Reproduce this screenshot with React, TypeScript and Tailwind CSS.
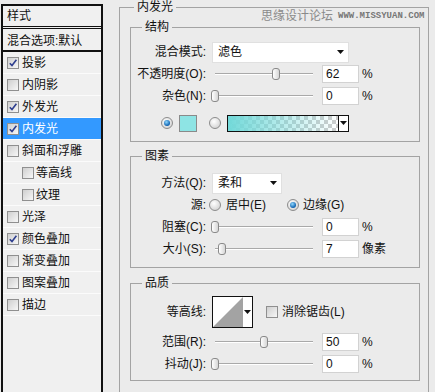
import React from "react";

const FONT = "font-['Liberation_Sans','Noto_Sans_CJK_SC',sans-serif]";

const layers = [
  { name: "投影", checked: true },
  { name: "内阴影", checked: false },
  { name: "外发光", checked: true },
  { name: "内发光", checked: true, active: true },
  { name: "斜面和浮雕", checked: false },
  { name: "等高线", checked: false, indent: true },
  { name: "纹理", checked: false, indent: true },
  { name: "光泽", checked: false },
  { name: "颜色叠加", checked: true },
  { name: "渐变叠加", checked: false },
  { name: "图案叠加", checked: false },
  { name: "描边", checked: false },
];

function Check({ checked }: { checked?: boolean }) {
  return (
    <span className="flex h-[12px] w-[12px] shrink-0 items-center justify-center border border-[#8f8f8f] bg-[linear-gradient(135deg,#cfcfcf,#f7f7f7)]">
      {checked && (
        <svg width="10" height="10" viewBox="0 0 10 10">
          <path d="M1.8 5.2 L4 7.6 L8.4 1.8" fill="none" stroke="#2f3f8f" strokeWidth="1.6" />
        </svg>
      )}
    </span>
  );
}

function Radio({ on }: { on?: boolean }) {
  return (
    <span className="flex h-[12px] w-[12px] shrink-0 items-center justify-center rounded-full border border-[#8c8c8c] bg-[radial-gradient(circle_at_40%_35%,#ffffff,#c9c9c9)]">
      {on && <span className="h-[6px] w-[6px] rounded-full bg-[radial-gradient(circle_at_40%_35%,#8fd8ff,#0b5fae_70%)]" />}
    </span>
  );
}

function Arrow() {
  return (
    <svg width="7" height="4" viewBox="0 0 7 4" className="shrink-0">
      <path d="M0 0 H7 L3.5 4 Z" fill="#111" />
    </svg>
  );
}

function Label({ children }: { children: React.ReactNode }) {
  return <span className="w-[75px] shrink-0 text-right">{children}</span>;
}

function Slider({ pct }: { pct: number }) {
  return (
    <div className="relative ml-[5px] h-[14px] w-[105px] shrink-0">
      <div className="absolute left-[4px] right-[3px] top-[6px] h-[2px] border-t border-[#a9a9a9] bg-white" />
      <div
        className="absolute top-[1px] h-[12px] w-[8px] rounded-[3px] border border-[#8a8a8a] bg-[linear-gradient(to_right,#ffffff,#d6d6d6)]"
        style={{ left: `${pct * 0.98}px` }}
      />
    </div>
  );
}

function NumBox({ v, unit = "%" }: { v: string; unit?: string }) {
  return (
    <>
      <div className="ml-[6px] flex h-[18px] w-[37px] shrink-0 items-center border border-[#d2d2d2] bg-white pl-[3px]">
        {v}
      </div>
      <span className="ml-[3px]">{unit}</span>
    </>
  );
}

function Group({ title, className, children }: { title: string; className: string; children: React.ReactNode }) {
  return (
    <fieldset className={`ml-[10px] w-[290px] border border-[#a3a3a3] ${className}`}>
      <legend className="ml-[11px] px-[3px] leading-[14px]">{title}</legend>
      {children}
    </fieldset>
  );
}

export default function App() {
  return (
    <div className={`relative flex h-[392px] w-[435px] overflow-hidden bg-[#ebebeb] text-[12px] text-[#111] ${FONT}`}>
      {/* layer style list */}
      <div className="ml-[1px] mt-[4px] h-[400px] w-[102px] shrink-0 border-2 border-[#111] bg-[#f0f0f0]">
        <div className="flex h-[20px] items-center pl-[4px]">样式</div>
        <div className="h-[3px] border-y border-[#111]" />
        <div className="flex h-[23px] items-center border-b-2 border-[#111] pl-[4px] pt-[2px]">混合选项:默认</div>
        {layers.map((l) => (
          <div
            key={l.name}
            className={`flex h-[22px] items-center border-b border-[#fbfbfb] ${l.active ? "bg-[#3399ff] text-white" : ""}`}
          >
            <span className={l.indent ? "ml-[19px]" : "ml-[4px]"}>
              <Check checked={l.checked} />
            </span>
            <span className={l.indent ? "ml-[2px]" : "ml-[3px]"}>{l.name}</span>
          </div>
        ))}
      </div>

      {/* inner glow settings */}
      <fieldset className="ml-[16px] h-[400px] w-[310px] shrink-0 border border-[#a3a3a3]">
        <legend className="ml-[14px] px-[3px] leading-[14px]">内发光</legend>

        <Group title="结构" className="mt-[6px] pb-[7px]">
          <div className="mt-[7px] flex h-[22px] items-center">
            <Label>混合模式:</Label>
            <div className="ml-[6px] flex h-[21px] w-[137px] items-center justify-between border border-[#e0e0e0] bg-white pl-[5px] pr-[4px]">
              <span>滤色</span>
              <Arrow />
            </div>
          </div>
          <div className="flex h-[22px] items-center">
            <Label>不透明度(O):</Label>
            <Slider pct={62} />
            <NumBox v="62" />
          </div>
          <div className="flex h-[22px] items-center">
            <Label>杂色(N):</Label>
            <Slider pct={0} />
            <NumBox v="0" />
          </div>
          <div className="mt-[5px] flex h-[22px] items-center pl-[30px]">
            <Radio on />
            <div className="ml-[6px] h-[17px] w-[18px] border border-[#8a8a8a] bg-[#8ee4e4]" />
            <span className="ml-[12px]">
              <Radio />
            </span>
            <div className="ml-[6px] flex h-[17px] w-[122px] border border-[#111]">
              <div className="flex-1 bg-[linear-gradient(to_right,#72d9d9,rgba(114,217,217,0)),repeating-conic-gradient(#cccccc_0%_25%,#ffffff_0%_50%)] bg-[length:100%_100%,8px_8px]" />
              <div className="flex w-[10px] items-center justify-center border-l border-[#111] bg-white">
                <Arrow />
              </div>
            </div>
          </div>
        </Group>

        <Group title="图素" className="mt-[7px] pb-[7px]">
          <div className="mt-[9px] flex h-[22px] items-center">
            <Label>方法(Q):</Label>
            <div className="ml-[6px] flex h-[21px] w-[70px] items-center justify-between border border-[#e0e0e0] bg-white pl-[5px] pr-[4px]">
              <span>柔和</span>
              <Arrow />
            </div>
          </div>
          <div className="flex h-[22px] items-center">
            <Label>源:</Label>
            <div className="ml-[3px] flex w-[78px] items-center">
              <Radio />
              <span className="ml-[5px]">居中(E)</span>
            </div>
            <Radio on />
            <span className="ml-[4px]">边缘(G)</span>
          </div>
          <div className="flex h-[22px] items-center">
            <Label>阻塞(C):</Label>
            <Slider pct={0} />
            <NumBox v="0" />
          </div>
          <div className="flex h-[22px] items-center">
            <Label>大小(S):</Label>
            <Slider pct={7} />
            <NumBox v="7" unit="像素" />
          </div>
        </Group>

        <Group title="品质" className="mt-[8px] pb-[5px]">
          <div className="mt-[6px] flex h-[32px] items-center">
            <Label>等高线:</Label>
            <div className="ml-[6px] flex h-[32px] w-[41px] items-center border border-[#111] bg-white">
              <svg width="30" height="30" viewBox="0 0 30 30" className="shrink-0">
                <polygon points="0,30 30,0 30,30" fill="#a3a3a3" />
              </svg>
              <div className="flex flex-1 justify-center">
                <Arrow />
              </div>
            </div>
            <span className="ml-[13px]">
              <Check />
            </span>
            <span className="ml-[4px]">消除锯齿(L)</span>
          </div>
          <div className="mt-[3px] flex h-[22px] items-center">
            <Label>范围(R):</Label>
            <Slider pct={50} />
            <NumBox v="50" />
          </div>
          <div className="flex h-[22px] items-center">
            <Label>抖动(J):</Label>
            <Slider pct={0} />
            <NumBox v="0" />
          </div>
        </Group>
      </fieldset>

      {/* watermark */}
      <div className="absolute left-[261px] top-[9px] flex items-center">
        <span className="text-[12px] leading-[14px] text-[#8a8a8a]">思缘设计论坛</span>
        <span className="ml-[5px] font-['Liberation_Mono',monospace] text-[9px] font-bold leading-[10px] text-[#777]">
          WWW.MISSYUAN.COM
        </span>
      </div>
    </div>
  );
}
